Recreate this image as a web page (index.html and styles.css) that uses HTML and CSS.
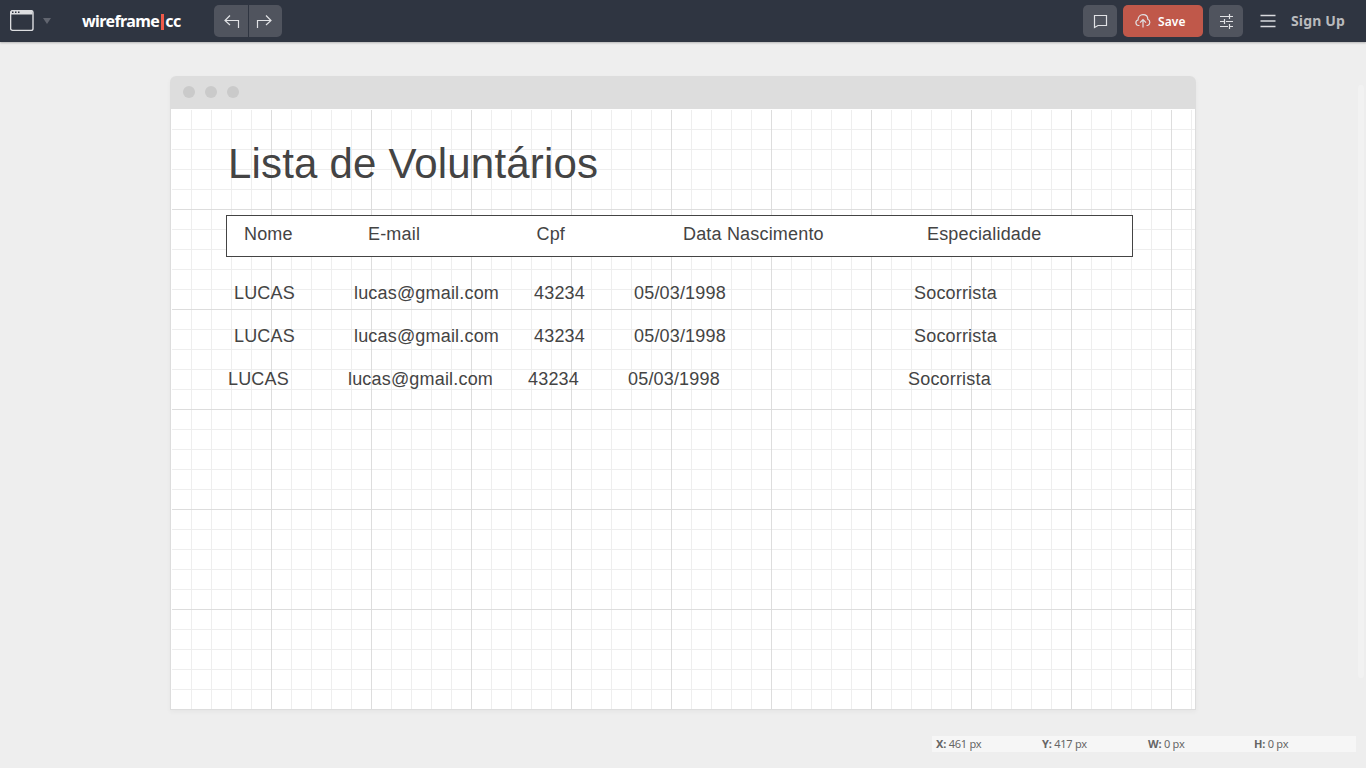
FILE: index.html
```html
<!DOCTYPE html>
<html lang="pt">
<head>
<meta charset="utf-8">
<title>wireframe|cc</title>
<link rel="stylesheet" href="styles.css">
</head>
<body>
<header class="topbar">
  <svg class="device" width="24" height="22" viewBox="0 0 24 22"><rect x=".6" y=".6" width="22.4" height="19.8" rx="2" fill="none" stroke="#dcdde0" stroke-width="1.4"/><path d="M1 4.500V2q0-1 1-1h19.500q1 0 1 1v2.500z" fill="#dcdde0"/><path d="M2 2.300h1.500M5 2.300h1.500M8 2.300h1.500" stroke="#2f3541" stroke-width="1.400"/></svg>
  <svg class="caret" width="8" height="6" viewBox="0 0 8 6"><path d="M0 0h8L4 6z" fill="#61656f"/></svg>
  <div class="logo"><span>wireframe</span><i class="logo-bar"></i><span>cc</span></div>
  <div class="history">
    <button class="btn undo"><svg width="34" height="32" viewBox="0 0 34 32"><path d="M24.500 23V15.500H11.500M16 10.500l-5 5 5 4.500"/></svg></button>
    <button class="btn redo"><svg width="33" height="32" viewBox="0 0 33 32"><path d="M8.500 23V15.500H21.500M17 10.500l5 5-5 4.500"/></svg></button>
  </div>
  <button class="btn comment"><svg width="34" height="32" viewBox="0 0 34 32"><path d="M11.500 10.500H23.500V20.500H15L11.500 22.500z"/></svg></button>
  <button class="btn save"><svg width="16" height="14" viewBox="0 0 16 14"><path d="M4.500 11.500H3.500A2.800 2.800 0 0 1 3 6C3 2.800 5.200.7 8 .7c2.900 0 4.800 2 4.800 4.600A3.300 3.300 0 0 1 12.500 11.500H11.500M8 13.500V6M5 8.700l3-3 3 3"/></svg><span>Save</span></button>
  <button class="btn settings"><svg width="34" height="32" viewBox="0 0 34 32"><path d="M11 11.500h9M20.500 9v5M20.500 11.500H24M11 16.500h4M15.500 14v5M17 16.500h7M11 21.500h8M20.500 19v5M20.500 21.500H24"/></svg></button>
  <svg class="menu" width="16" height="14" viewBox="0 0 16 14"><path d="M.5 1.500h15M.5 7h15M.5 12.500h15" stroke="#d9dade" stroke-width="1.400"/></svg>
  <a class="signup">Sign Up</a>
</header>
<main class="workspace">
  <section class="window">
    <div class="titlebar"><i></i><i></i><i></i></div>
    <div class="canvas">
      <h1>Lista de Voluntários</h1>
      <div class="head"><span>Nome</span><span>E-mail</span><span>Cpf</span><span>Data Nascimento</span><span>Especialidade</span></div>
      <div class="row"><span>LUCAS</span><span>lucas@gmail.com</span><span>43234</span><span>05/03/1998</span><span>Socorrista</span></div>
      <div class="row"><span>LUCAS</span><span>lucas@gmail.com</span><span>43234</span><span>05/03/1998</span><span>Socorrista</span></div>
      <div class="row row-left"><span>LUCAS</span><span>lucas@gmail.com</span><span>43234</span><span>05/03/1998</span><span>Socorrista</span></div>
    </div>
  </section>
  <div class="status"><span><b>X:</b> 461 px</span><span><b>Y:</b> 417 px</span><span><b>W:</b> 0 px</span><span><b>H:</b> 0 px</span></div>
  <div class="scroll"></div>
</main>
</body>
</html>
```
FILE: styles.css
```css
* { box-sizing: border-box; }
body { margin: 0; height: 768px; overflow: hidden; background: #eee; font-family: "Noto Sans", sans-serif; }
.topbar { height: 42px; background: #2f3541; display: flex; align-items: center; box-shadow: 0 1px 2px rgba(0,0,0,.25); }
.device { margin-left: 10px; }
.caret { margin-left: 9px; }
.logo { flex: none; display: flex; align-items: center; margin-left: 31px; width: 132px; color: #fff; font: 700 16px/24px "Noto Sans", sans-serif; letter-spacing: -.6px; white-space: nowrap; }
.logo-bar { flex: none; width: 3px; height: 16px; background: #f05a49; margin: 2px 1px 0 2px; }
.history { display: flex; gap: 1px; }
.btn { height: 32px; padding: 0; border: 0; border-radius: 5px; background: #50545e; display: flex; align-items: center; justify-content: center; }
.btn svg { flex: none; fill: none; stroke: #e1e2e5; stroke-width: 1.2; }
.undo { width: 34px; border-radius: 5px 0 0 5px; }
.redo { width: 33px; border-radius: 0 5px 5px 0; }
.comment { width: 34px; margin-left: auto; }
.save { width: 80px; margin: 0 6px; background: #c0584a; justify-content: flex-start; padding-left: 12px; color: #fff; font: 600 12px/16px "Noto Sans", sans-serif; letter-spacing: .1px; }
.save span { margin: 1px 0 0 7px; }
.settings { width: 34px; }
.menu { margin-left: 17px; }
.signup { width: 75px; margin-left: 15px; color: #b9babd; font: 700 14px/20px "Noto Sans", sans-serif; letter-spacing: .15px; }
.workspace { position: relative; height: 726px; padding-top: 34px; }
.window { width: 1026px; height: 634px; margin: 0 auto; border-radius: 6px 6px 0 0; box-shadow: 0 2px 5px rgba(0,0,0,.04); }
.titlebar { height: 33px; padding: 10px 13px; display: flex; gap: 10px; background: #ddd; border-radius: 6px 6px 0 0; }
.titlebar i { width: 12px; height: 12px; border-radius: 50%; background: #cacaca; }
.canvas {
  height: 601px; border: solid #ddd; border-width: 0 1px 1px; color: #444;
  font: 18px/22px "Liberation Sans", Arial, sans-serif; letter-spacing: .18px;
  background-color: #fff;
  background-image: linear-gradient(#fff, #fff), linear-gradient(#fff, #fff), linear-gradient(#ddd 1px, transparent 1px), linear-gradient(90deg, #ddd 1px, transparent 1px), linear-gradient(#eee 1px, transparent 1px), linear-gradient(90deg, #eee 1px, transparent 1px);
  background-size: 100% 1px, 1px 100%, 100px 100px, 100px 100px, 20px 20px, 20px 20px;
  background-position: 0 0, 0 0, 0 100px, 100px 0, 0 20px, 20px 0;
  background-repeat: no-repeat, no-repeat, repeat, repeat, repeat, repeat;
  padding: 30px 0 0 55px;
}
h1 { margin: 0 0 27px; padding-left: 2px; font-size: 42px; line-height: 49px; font-weight: 400; }
.head, .row { display: grid; white-space: nowrap; }
.head { width: 907px; height: 42px; padding: 7px 0 0 17px; border: 1px solid #444; background: #fff; grid-template-columns: 124px 168.5px 146.5px 244px 1fr; }
.row { height: 43px; padding: 25px 0 0 8px; grid-template-columns: 120px 180px 100px 280px 1fr; }
.row-left { padding-left: 2px; }
.status { position: absolute; right: 10px; bottom: 16px; width: 424px; height: 16px; padding-left: 4px; display: grid; grid-template-columns: repeat(4, 106px); background: #f6f6f6; color: #666; font-size: 11px; line-height: 16px; letter-spacing: -.23px; }
.scroll { position: absolute; right: 2px; top: 43px; width: 6px; height: 593px; border-radius: 3px; background: #f2f2f2; }
```
